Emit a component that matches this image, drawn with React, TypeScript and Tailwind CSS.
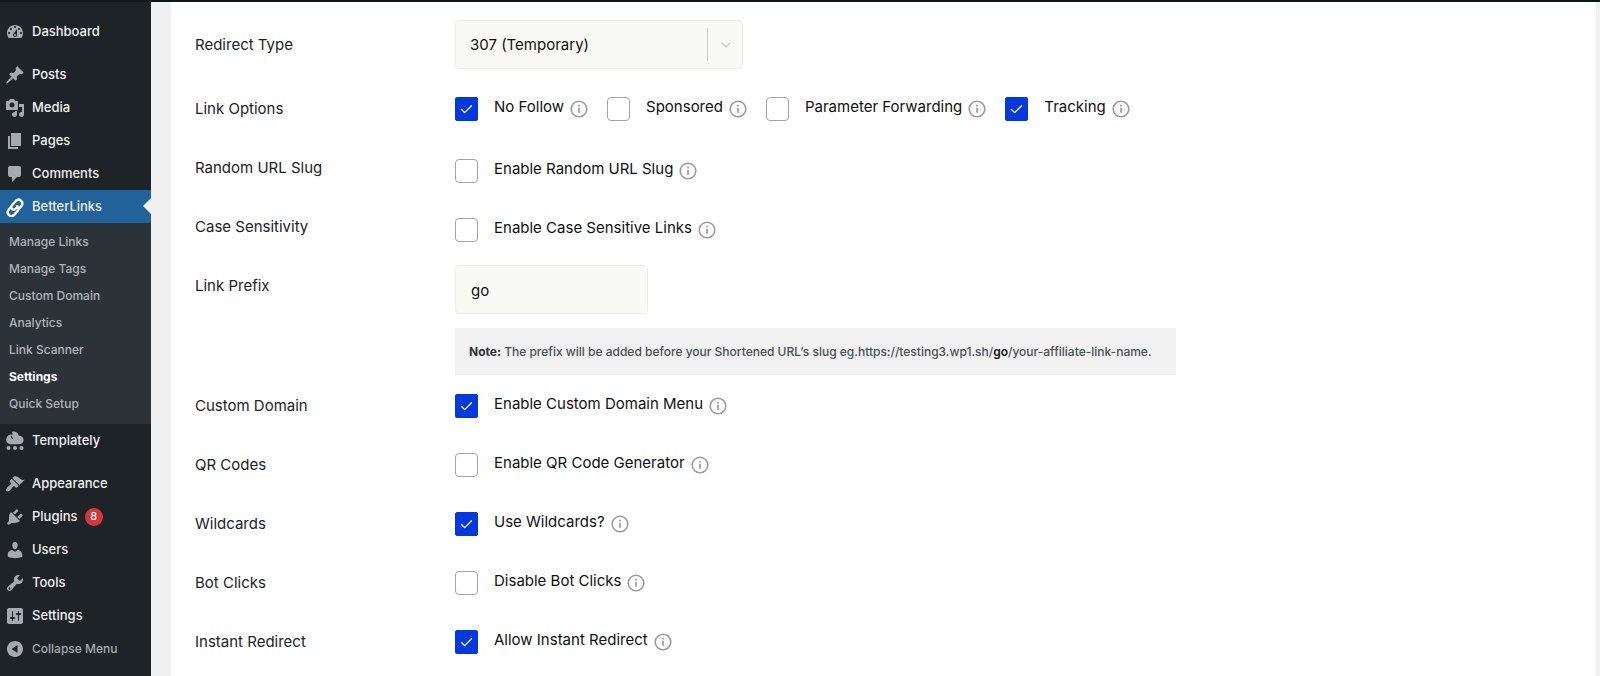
import { useState } from 'react';
import type { ReactNode } from 'react';
import { Check, ChevronDown } from 'lucide-react';
import clsx from 'clsx';

const ICONS = {
    dashboard: 'M3.76 16h12.48c1.1-1.37 1.76-3.11 1.76-5 0-4.42-3.58-8-8-8s-8 3.58-8 8c0 1.89.66 3.63 1.76 5zM10 4c.55 0 1 .45 1 1s-.45 1-1 1-1-.45-1-1 .45-1 1-1zM6 6c.55 0 1 .45 1 1s-.45 1-1 1-1-.45-1-1 .45-1 1-1zm8 0c.55 0 1 .45 1 1s-.45 1-1 1-1-.45-1-1 .45-1 1-1zm-5.37 5.55L12 7v6c0 1.1-.9 2-2 2s-2-.9-2-2c0-.57.24-1.08.63-1.45zM4 10c.55 0 1 .45 1 1s-.45 1-1 1-1-.45-1-1 .45-1 1-1zm12 0c.55 0 1 .45 1 1s-.45 1-1 1-1-.45-1-1 .45-1 1-1zm-5 3c0-.55-.45-1-1-1s-1 .45-1 1 .45 1 1 1 1-.45 1-1z',
    posts: 'M10.44 3.02l1.82-1.82 6.36 6.35-1.83 1.82c-1.05-.68-2.48-.57-3.41.36l-.75.75c-.92.93-1.04 2.35-.35 3.41l-1.83 1.82-2.41-2.41-2.8 2.79c-.42.42-3.38 2.71-3.8 2.29s1.86-3.39 2.28-3.81l2.79-2.79L4.1 9.36l1.83-1.82c1.05.69 2.48.57 3.4-.36l.75-.75c.93-.92 1.05-2.35.36-3.41z',
    media: 'M13 11V4c0-.55-.45-1-1-1h-1.67L9 1H5L3.67 3H2c-.55 0-1 .45-1 1v7c0 .55.45 1 1 1h10c.55 0 1-.45 1-1zM7 4.5c1.38 0 2.5 1.12 2.5 2.5S8.38 9.5 7 9.5 4.5 8.38 4.5 7 5.62 4.5 7 4.5zM14 6h5v10.5c0 1.38-1.12 2.5-2.5 2.5S14 17.88 14 16.5s1.12-2.5 2.5-2.5c.17 0 .34.02.5.05V9h-3V6zm-4 8.05V13h2v3.5c0 1.38-1.12 2.5-2.5 2.5S7 17.88 7 16.5 8.12 14 9.5 14c.17 0 .34.02.5.05z',
    pages: 'M6 15V2h10v13H6zm-1 1h8v2H3V5h2v11z',
    comments: 'M5 2h9c1.1 0 2 .9 2 2v7c0 1.1-.9 2-2 2h-2l-5 5v-5H5c-1.1 0-2-.9-2-2V4c0-1.1.9-2 2-2z',
    appearance: 'M14.48 11.06L7.41 3.99l1.5-1.5c.5-.56 2.3-.47 3.51.32 1.21.8 1.43 1.28 2.91 2.1 1.18.64 2.45 1.26 4.45.85zm-.71.71L6.7 4.7 4.93 6.47c-.39.39-.39 1.02 0 1.41l1.06 1.06c.39.39.39 1.03 0 1.42-.6.6-1.43 1.11-2.21 1.69-.35.26-.7.53-1.01.84C1.43 14.23.4 16.08 1.4 17.07c.99 1 2.84-.03 4.18-1.36.31-.31.58-.66.85-1.02.57-.78 1.08-1.61 1.69-2.21.39-.39 1.02-.39 1.41 0l1.06 1.06c.39.39 1.02.39 1.41 0z',
    plugins: 'M13.11 4.36L9.87 7.6 8 5.73l3.24-3.24c.35-.34 1.05-.2 1.56.32.52.51.66 1.21.31 1.55zm-8 1.77l.91-1.12 9.01 9.01-1.19.84c-.71.71-2.63 1.16-3.82 1.16H6.14L4.9 17.26c-.59.59-1.54.59-2.12 0-.59-.58-.59-1.53 0-2.12l1.24-1.24v-3.88c0-1.13.4-3.19 1.09-3.89zm7.26 3.97l3.24-3.24c.34-.35 1.04-.21 1.55.31.52.51.66 1.21.31 1.55l-3.24 3.25z',
    users: 'M10 9.25c-2.27 0-2.73-3.44-2.73-3.44C7 4.02 7.82 2 9.97 2c2.16 0 2.98 2.02 2.71 3.81 0 0-.41 3.44-2.68 3.44zm0 2.57L12.72 10c2.39 0 4.52 2.33 4.52 4.53v2.49s-3.65 1.13-7.24 1.13c-3.65 0-7.24-1.13-7.24-1.13v-2.49c0-2.25 1.94-4.48 4.47-4.48z',
    tools: 'M16.68 9.77c-1.34 1.34-3.3 1.67-4.95.99l-5.41 6.52c-.99.99-2.59.99-3.58 0s-.99-2.59 0-3.57l6.52-5.42c-.68-1.65-.35-3.61.99-4.95 1.28-1.28 3.12-1.62 4.72-1.06l-2.89 2.89 2.82 2.82 2.86-2.87c.53 1.58.18 3.39-1.08 4.65zM3.81 16.21c.4.39 1.04.39 1.43 0 .4-.4.4-1.04 0-1.43-.39-.4-1.03-.4-1.43 0-.39.39-.39 1.03 0 1.43z',
    settings: 'M18 16V4c0-1.1-.9-2-2-2H4c-1.1 0-2 .9-2 2v12c0 1.1.9 2 2 2h12c1.1 0 2-.9 2-2zM8 11h1c.55 0 1 .45 1 1s-.45 1-1 1H8v1.5c0 .28-.22.5-.5.5s-.5-.22-.5-.5V13H6c-.55 0-1-.45-1-1s.45-1 1-1h1V5.5c0-.28.22-.5.5-.5s.5.22.5.5V11zm5-2h-1c-.55 0-1-.45-1-1s.45-1 1-1h1V5.5c0-.28.22-.5.5-.5s.5.22.5.5V7h1c.55 0 1 .45 1 1s-.45 1-1 1h-1v5.5c0 .28-.22.5-.5.5s-.5-.22-.5-.5V9z',
    collapse: 'M10 2c4.42 0 8 3.58 8 8s-3.58 8-8 8-8-3.58-8-8 3.58-8 8-8zm2.5 12V6L6.5 10z',
};

type IconName = keyof typeof ICONS;

function DashIcon({ name }: { name: IconName }) {
    return (
        <svg viewBox="0 0 20 20" className="size-5 shrink-0 fill-[#a7aaad]" fillRule="evenodd" aria-hidden="true">
            <path d={ICONS[name]} />
        </svg>
    );
}

function BetterLinksIcon() {
    return (
        <svg viewBox="0 0 20 20" className="size-5 shrink-0" fill="none" stroke="#fff" strokeWidth="2.4" strokeLinecap="round" aria-hidden="true">
            <path d="M14.3 11.6l1.9-2.2C19.6 5 14.2.4 10.6 4.2L7 8.3c-1.7 2.2-.2 4.6 2.4 4.3 1.2-.2 1.700-1.1 2.500-2" />
            <path d="M5.700 10.200l-1.900 2.200C.4 16.800 5.800 21.400 9.400 17.600L13 13.500c1.300-1.700.7-3.700-.9-4.300" />
        </svg>
    );
}

function TemplatelyIcon() {
    return (
        <svg viewBox="0 0 20 20" className="size-5 shrink-0 fill-[#a7aaad]" aria-hidden="true">
            <path d="M6.8.9c2.600-.9 5.400.1 6.400 2.300.2.500.4 1 .4 1.500 2.900-.2 5 1.600 5 4.200 0 2.600-2 4.400-4.600 4.400H6C3.300 13.300 1.200 11.600 1.200 9c0-2.400 1.300-4.600 3.500-5.300.9-.3 1.900-.1 2.500.3.500-1.100.3-2.200-.4-3.100z" />
            <path d="M6.600 4.600c-.6 1.600.2 2.800 1.500 2.700" className="fill-none stroke-[#1d2327]" strokeWidth="1.1" />
            <circle cx="3.5" cy="17" r="2" />
            <circle cx="10" cy="17" r="2" />
            <circle cx="16.5" cy="17" r="2" />
        </svg>
    );
}

function InfoIcon() {
    return (
        <svg viewBox="0 0 18 18" className="size-[18px] shrink-0" fill="none" stroke="#9b9b9b" aria-hidden="true">
            <circle cx="9" cy="9" r="7.8" strokeWidth="1.6" />
            <path d="M9 7.8v5M9 4.8v1.7" strokeWidth="1.7" />
        </svg>
    );
}

function MenuItem({ icon, label, count, muted }: { icon: ReactNode; label: string; count?: number; muted?: boolean }) {
    return (
        <a
            href="#"
            className={clsx(
                'flex h-[33px] items-center gap-[7px] pl-[5px] font-medium',
                muted ? 'text-xs text-[#a7aaad]' : 'text-[13px] text-[#f0f0f1]',
            )}
        >
            {icon}
            {label}
            {count !== undefined && (
                <span className="flex size-[18px] items-center justify-center rounded-full bg-[#d63638] text-[11px] font-medium text-white">
                    {count}
                </span>
            )}
        </a>
    );
}

const SUBMENU = ['Manage Links', 'Manage Tags', 'Custom Domain', 'Analytics', 'Link Scanner', 'Settings', 'Quick Setup'];

function Sidebar() {
    return (
        <nav className="w-[151px] shrink-0 bg-[#1d2327] pt-[13px]">
            <MenuItem icon={<DashIcon name="dashboard" />} label="Dashboard" />
            <div className="mt-2.5">
                <MenuItem icon={<DashIcon name="posts" />} label="Posts" />
                <MenuItem icon={<DashIcon name="media" />} label="Media" />
                <MenuItem icon={<DashIcon name="pages" />} label="Pages" />
                <MenuItem icon={<DashIcon name="comments" />} label="Comments" />
            </div>
            <div className="relative bg-[#21629b]">
                <MenuItem icon={<BetterLinksIcon />} label="BetterLinks" />
                <span className="absolute top-2 right-0 border-y-8 border-r-8 border-y-transparent border-r-[#f0f0f1]" />
            </div>
            <ul className="bg-[#2c3338] pt-[5px] pb-[7px]">
                {SUBMENU.map((item) => (
                    <li key={item}>
                        <a
                            href="#"
                            className={clsx('flex h-[27px] items-center pl-[9px] text-xs', item === 'Settings' ? 'font-bold text-white' : 'font-medium text-[#b0b4b8]')}
                        >
                            {item}
                        </a>
                    </li>
                ))}
            </ul>
            <MenuItem icon={<TemplatelyIcon />} label="Templately" />
            <div className="mt-2.5">
                <MenuItem icon={<DashIcon name="appearance" />} label="Appearance" />
                <MenuItem icon={<DashIcon name="plugins" />} label="Plugins" count={8} />
                <MenuItem icon={<DashIcon name="users" />} label="Users" />
                <MenuItem icon={<DashIcon name="tools" />} label="Tools" />
                <MenuItem icon={<DashIcon name="settings" />} label="Settings" />
                <MenuItem icon={<DashIcon name="collapse" />} label="Collapse Menu" muted />
            </div>
        </nav>
    );
}

function Option({ label, checked = false }: { label: string; checked?: boolean }) {
    const [on, setOn] = useState(checked);

    return (
        <label className="flex h-7 items-center text-[15px] text-[#101010]">
            <span className="grid shrink-0">
                <input
                    type="checkbox"
                    checked={on}
                    onChange={() => setOn(!on)}
                    className="col-start-1 row-start-1 h-6 w-[23px] appearance-none rounded-[4px] border border-[#a3a3a3] bg-white checked:rounded-[2px] checked:border-[#0239dd] checked:bg-[#0239dd]"
                />
                {on && <Check size={15} strokeWidth={2} className="pointer-events-none col-start-1 row-start-1 place-self-center text-white" />}
            </span>
            <span className="ml-4 mr-1.5 pb-1 leading-6">{label}</span>
            <InfoIcon />
        </label>
    );
}

function Row({ label, htmlFor, children }: { label: string; htmlFor?: string; children: ReactNode }) {
    return (
        <div className="grid min-h-[59px] grid-cols-[260px_1fr] items-start">
            {htmlFor ? (
                <label htmlFor={htmlFor} className="pt-[9px] text-[15px] leading-6 text-[#1d2327]">{label}</label>
            ) : (
                <span className="pt-[9px] text-[15px] leading-6 text-[#1d2327]">{label}</span>
            )}
            {children}
        </div>
    );
}

export default function App() {
    return (
        <div className="flex min-h-screen flex-col border-t-2 border-[#101517] bg-[#f0f0f1] font-['Inter',sans-serif]">
            <div className="flex flex-1">
                <Sidebar />
                <main className="ml-5 mr-1 flex-1 bg-white pt-[18px] pl-6">
                    <div className="grid min-h-[68px] grid-cols-[260px_1fr] items-start">
                        <label htmlFor="redirect-type" className="pt-[13px] text-[15px] leading-6 text-[#1d2327]">Redirect Type</label>
                        <div className="relative w-72">
                            <select
                                id="redirect-type"
                                className="h-[49px] w-full appearance-none rounded-[4px] border border-[#ebeef0] bg-[#f9faf6] px-3.5 pt-0.5 text-[15px] text-[#101010]"
                            >
                                <option>307 (Temporary)</option>
                                <option>302 (Temporary)</option>
                                <option>301 (Permanent)</option>
                            </select>
                            <div className="pointer-events-none absolute inset-y-2 right-0 flex w-9 items-center justify-center border-l border-[#cccccc] text-[#cccccc]">
                                <ChevronDown size={16} />
                            </div>
                        </div>
                    </div>

                    <Row label="Link Options">
                        <div className="flex flex-wrap gap-x-[19px] pt-[7px]">
                            <Option label="No Follow" checked />
                            <Option label="Sponsored" />
                            <Option label="Parameter Forwarding" />
                            <Option label="Tracking" checked />
                        </div>
                    </Row>
                    <Row label="Random URL Slug">
                        <div className="flex pt-2.5"><Option label="Enable Random URL Slug" /></div>
                    </Row>
                    <Row label="Case Sensitivity">
                        <div className="flex pt-2.5"><Option label="Enable Case Sensitive Links" /></div>
                    </Row>
                    <Row label="Link Prefix" htmlFor="link-prefix">
                        <div className="flex flex-col items-start pb-2.5">
                            <input
                                id="link-prefix"
                                type="text"
                                defaultValue="go"
                                className="h-[49px] w-[193px] rounded-[4px] border border-[#ebeef0] bg-[#f9faf6] px-[15px] pt-0.5 text-[15px] text-[#101010]"
                            />
                            <p className="mt-3.5 w-full max-w-[721px] bg-[#f1f1f1] px-3.5 py-3.5 text-xs leading-[19px] font-medium text-[#4a5056]">
                                <b className="font-bold text-[#2c3338]">Note:</b> The prefix will be added before your Shortened URL’s slug eg.https://testing3.wp1.sh/<b className="font-semibold text-[#101010]">go</b>/your-affiliate-link-name.
                            </p>
                        </div>
                    </Row>
                    <Row label="Custom Domain">
                        <div className="flex pt-[7px]"><Option label="Enable Custom Domain Menu" checked /></div>
                    </Row>
                    <Row label="QR Codes">
                        <div className="flex pt-[7px]"><Option label="Enable QR Code Generator" /></div>
                    </Row>
                    <Row label="Wildcards">
                        <div className="flex pt-[7px]"><Option label="Use Wildcards?" checked /></div>
                    </Row>
                    <Row label="Bot Clicks">
                        <div className="flex pt-[7px]"><Option label="Disable Bot Clicks" /></div>
                    </Row>
                    <div className="-mb-4">
                        <Row label="Instant Redirect">
                            <div className="flex pt-[7px]"><Option label="Allow Instant Redirect" checked /></div>
                        </Row>
                    </div>
                </main>
            </div>
        </div>
    );
}
